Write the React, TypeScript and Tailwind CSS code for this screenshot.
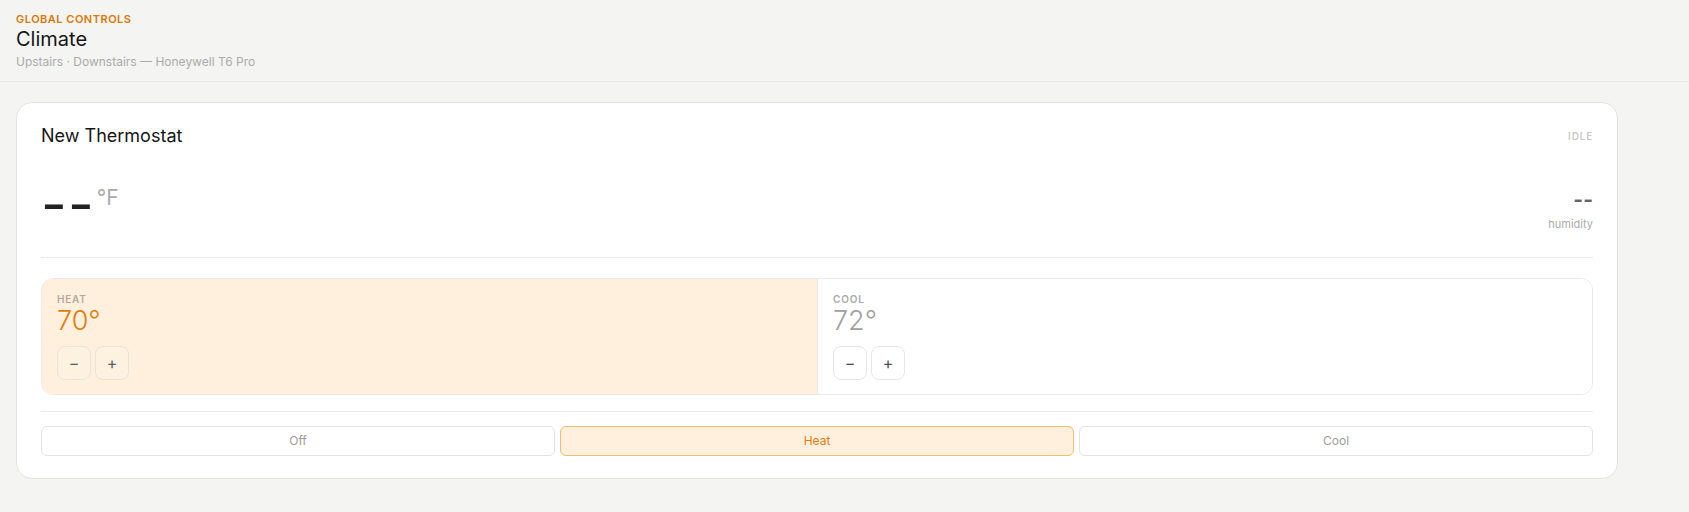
import React from "react";

function StepBtn({ children, tone }: { children: React.ReactNode; tone: "heat" | "cool" }) {
  return (
    <button
      className={
        tone === "heat"
          ? "w-[34px] h-[34px] rounded-lg border border-[#ebe3d6] bg-[#fdf1e0] text-[#5f5f5f] text-[16px] leading-none flex items-center justify-center"
          : "w-[34px] h-[34px] rounded-lg border border-[#e6e6e6] bg-white text-[#4f4f4f] text-[16px] leading-none flex items-center justify-center"
      }
    >
      {children}
    </button>
  );
}

export default function App() {
  return (
    <div className="min-h-[512px] w-full bg-[#f4f4f2] font-['Inter',sans-serif]">
      <div className="px-4 pt-[13px] pb-[9px] border-b border-[#e9e9e6]">
        <div className="text-[11px] leading-[13px] font-semibold tracking-[0.045em] text-[#d97a08]">GLOBAL CONTROLS</div>
        <div className="text-[20px] leading-[26px] text-[#161616]">Climate</div>
        <div className="text-[12px] leading-5 text-[#ababab]">Upstairs · Downstairs — Honeywell T6 Pro</div>
      </div>

      <div className="px-4 pt-5">
        <div className="w-[1602px] bg-white border border-[#e4e3df] rounded-2xl px-6 pt-[21px] pb-[22px]">
          <div className="flex items-center justify-between h-6">
            <div className="text-[18px] leading-6 text-[#161616]">New Thermostat</div>
            <div className="text-[10px] leading-4 font-semibold tracking-[0.08em] text-[#c9c9c9]">IDLE</div>
          </div>

          <div className="mt-[28px] flex items-end justify-between">
            <div className="flex items-start">
              <span className="text-[56px] leading-none font-normal text-[#222222] tracking-[0.02em]">--</span>
              <span className="ml-[2px] mt-[8px] text-[21px] leading-7 text-[#aaaaaa]">°F</span>
            </div>
            <div className="flex flex-col items-end">
              <span className="text-[21px] leading-7 font-bold text-[#666666]">--</span>
              <span className="mt-[2px] text-[11px] leading-4 text-[#ababab]">humidity</span>
            </div>
          </div>

          <div className="mt-[25px] h-px bg-[#ebebeb]" />

          <div className="mt-5 grid grid-cols-2 rounded-xl border border-[#ebe9e5] overflow-hidden">
            <div className="bg-[#fef0dc] px-[15px] pt-[14px] pb-[14px]">
              <div className="text-[10px] leading-3 font-semibold tracking-[0.08em] text-[#b3aa9e]">HEAT</div>
              <div className="text-[27px] leading-8 font-light text-[#e07d10]">70°</div>
              <div className="mt-[9px] flex gap-1">
                <StepBtn tone="heat">−</StepBtn>
                <StepBtn tone="heat">+</StepBtn>
              </div>
            </div>
            <div className="bg-white border-l border-[#ebe9e5] px-[15px] pt-[14px] pb-[14px]">
              <div className="text-[10px] leading-3 font-semibold tracking-[0.08em] text-[#a9a9a9]">COOL</div>
              <div className="text-[27px] leading-8 font-light text-[#a0a0a0]">72°</div>
              <div className="mt-[9px] flex gap-1">
                <StepBtn tone="cool">−</StepBtn>
                <StepBtn tone="cool">+</StepBtn>
              </div>
            </div>
          </div>

          <div className="mt-[16px] h-px bg-[#ebebeb]" />

          <div className="mt-[14px] grid grid-cols-3 gap-[5px]">
            <button className="h-[30px] rounded-md border border-[#e3e3e3] bg-white text-[12px] text-[#9c9c9c]">Off</button>
            <button className="h-[30px] rounded-md border border-[#efbd6c] bg-[#fef0dc] text-[12px] text-[#e07d10]">Heat</button>
            <button className="h-[30px] rounded-md border border-[#e3e3e3] bg-white text-[12px] text-[#9c9c9c]">Cool</button>
          </div>
        </div>
      </div>
    </div>
  );
}
